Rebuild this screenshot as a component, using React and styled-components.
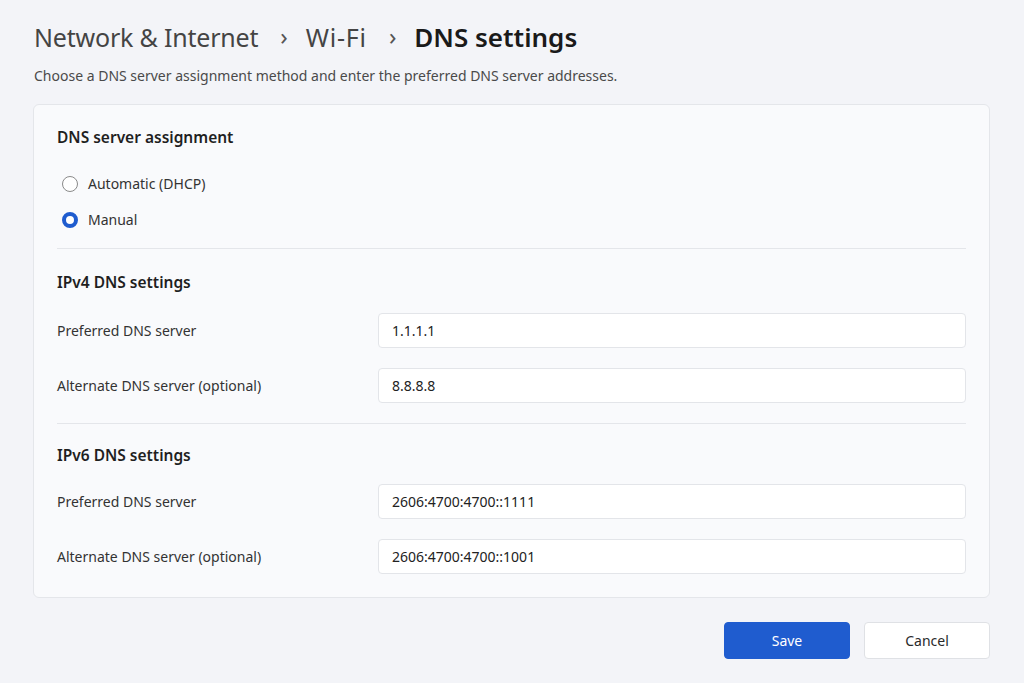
import styled, { createGlobalStyle } from "styled-components";

const Global = createGlobalStyle`
  body {
    margin: 0;
    background: #f3f4f8;
    font-family: "Noto Sans", "Open Sans", sans-serif;
    color: #1f1f1f;
  }
`;

export default function App() {
  return (
    <Page>
      <Global />
      <Crumbs>
        <Crumb>Network &amp; Internet</Crumb>
        <Chevron>›</Chevron>
        <Crumb $wide>Wi-Fi</Crumb>
        <Chevron>›</Chevron>
        <Crumb $current>DNS settings</Crumb>
      </Crumbs>
      <Intro>Choose a DNS server assignment method and enter the preferred DNS server addresses.</Intro>
      <Card>
        <Section>
          <Heading>DNS server assignment</Heading>
          <Radios>
            <RadioRow>
              <Radio />
              Automatic (DHCP)
            </RadioRow>
            <RadioRow>
              <Radio $checked />
              Manual
            </RadioRow>
          </Radios>
        </Section>
        <Divider />
        <Section $top={20}>
          <Heading>IPv4 DNS settings</Heading>
          <Fields $top={18}>
            <Field>
              <Label>Preferred DNS server</Label>
              <Input>1.1.1.1</Input>
            </Field>
            <Field>
              <Label>Alternate DNS server (optional)</Label>
              <Input>8.8.8.8</Input>
            </Field>
          </Fields>
        </Section>
        <Divider />
        <Section $top={18}>
          <Heading>IPv6 DNS settings</Heading>
          <Fields $top={16}>
            <Field>
              <Label>Preferred DNS server</Label>
              <Input>2606:4700:4700::1111</Input>
            </Field>
            <Field>
              <Label>Alternate DNS server (optional)</Label>
              <Input>2606:4700:4700::1001</Input>
            </Field>
          </Fields>
        </Section>
      </Card>
      <Actions>
        <Button $primary>Save</Button>
        <Button>Cancel</Button>
      </Actions>
    </Page>
  );
}

const Page = styled.div`
  width: 1024px;
  height: 683px;
  box-sizing: border-box;
  padding: 19px 34px 0 33px;
`;

const Crumbs = styled.div`
  display: flex;
  align-items: center;
  height: 36px;
  padding-left: 1px;
`;

const Crumb = styled.span`
  font-size: ${p => (p.$current ? "26px" : "25px")};
  font-weight: ${p => (p.$current ? 600 : 400)};
  color: ${p => (p.$current ? "#1a1a1a" : "#444")};
  letter-spacing: ${p => (p.$current ? "0px" : p.$wide ? "0.8px" : "-0.2px")};
`;

const Chevron = styled.span`
  font-size: 24px;
  color: #555;
  margin: 0 18px 0 22px;
  position: relative;
  top: -2px;
`;

const Intro = styled.p`
  margin: 11px 0 0 1px;
  font-size: 14px;
  color: #4a4a4a;
`;

const Card = styled.div`
  margin-top: 19px;
  height: 494px;
  box-sizing: border-box;
  background: #f9fafc;
  border: 1px solid #e4e6ea;
  border-radius: 6px;
  padding: 19px 23px 0 23px;
`;

const Section = styled.div`
  display: flex;
  flex-direction: column;
  padding-top: ${p => p.$top || 0}px;
`;

const Heading = styled.h3`
  margin: 0;
  font-size: 15.5px;
  font-weight: 600;
  color: #1f1f1f;
  line-height: 26px;
`;

const Radios = styled.div`
  display: flex;
  flex-direction: column;
  gap: 14px;
  margin: 23px 0 17px 0;
`;

const RadioRow = styled.label`
  display: flex;
  align-items: center;
  gap: 10px;
  font-size: 14px;
  color: #333;
  line-height: 22px;
  padding-left: 5px;
`;

const Radio = styled.span`
  width: 16px;
  height: 16px;
  box-sizing: border-box;
  border-radius: 50%;
  border: ${p => (p.$checked ? "4.5px solid #1f5ccf" : "1.5px solid #8a8a8a")};
  background: #fff;
`;

const Divider = styled.div`
  height: 1px;
  background: #e4e6ea;
`;

const Fields = styled.div`
  display: flex;
  flex-direction: column;
  gap: 20px;
  margin: ${p => p.$top}px 0 20px 0;
`;

const Field = styled.div`
  display: grid;
  grid-template-columns: 321px 1fr;
  align-items: center;
`;

const Label = styled.span`
  font-size: 14px;
  color: #333;
`;

const Input = styled.div`
  height: 35px;
  box-sizing: border-box;
  background: #fff;
  border: 1px solid #e3e5e9;
  border-radius: 4px;
  padding: 0 13px;
  display: flex;
  align-items: center;
  font-size: 14px;
  color: #222;
`;

const Actions = styled.div`
  display: flex;
  justify-content: flex-end;
  gap: 14px;
  margin-top: 24px;
`;

const Button = styled.button`
  width: 126px;
  height: 37px;
  border-radius: 4px;
  font-family: inherit;
  font-size: 14px;
  border: 1px solid ${p => (p.$primary ? "#1f5ccf" : "#dfe1e5")};
  background: ${p => (p.$primary ? "#1f5ccf" : "#fff")};
  color: ${p => (p.$primary ? "#fff" : "#2a2a2a")};
`;
